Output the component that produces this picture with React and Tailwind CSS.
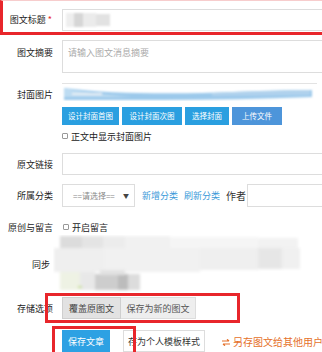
import React from "react";

function Label({ children, className = "" }) {
  return (
    <div className={"w-[53px] shrink-0 text-right text-[9px] leading-none text-[#222] whitespace-nowrap " + className}>
      {children}
    </div>
  );
}

function Check({ label }) {
  return (
    <div className="flex items-center gap-[3px] whitespace-nowrap">
      <span className="w-[6px] h-[6px] border border-[#999] rounded-[1px] bg-white" />
      <span className="text-[9px] leading-none text-[#222]">{label}</span>
    </div>
  );
}

function BlueBtn({ w, children, color = "bg-[#2a9fe0]" }) {
  return (
    <div className={`${w} shrink-0 h-[18px] ${color} text-white text-[7.5px] leading-none whitespace-nowrap flex items-center justify-center`}>
      {children}
    </div>
  );
}

export default function App() {
  return (
    <div className="relative w-[322px] h-[352px] overflow-hidden bg-white font-['Noto_Sans_CJK_SC','Noto_Sans',sans-serif]">
      {/* title row with red annotation */}
      <div className="h-[35px] border-l-[3px] border-b-[3px] border-t border-[#e8262b] border-t-[#f7cdcd] flex items-center pt-[6px]">
        <div className="w-[50px] shrink-0 text-right text-[9px] leading-none text-[#222] pr-[1px] whitespace-nowrap">
          图文标题<span className="text-[#e8262b] ml-[2px]">*</span>
        </div>
        <div className="ml-[9px] w-[270px] shrink-0 h-[22px] border border-[#ddd] bg-white overflow-hidden">
          <svg width="270" height="22" viewBox="0 0 270 22">
            <defs>
              <filter id="b1"><feGaussianBlur stdDeviation="1.2" /></filter>
            </defs>
            <g filter="url(#b1)">
              <rect x="3" y="3" width="8" height="14" fill="#eeeeee" />
              <rect x="11" y="3" width="9" height="14" fill="#d6d6d6" />
              <rect x="20" y="3" width="13" height="14" fill="#ebebeb" />
              <rect x="33" y="4" width="14" height="12" fill="#e2e2e2" />
            </g>
          </svg>
        </div>
      </div>

      {/* summary */}
      <div className="mt-[5px] flex items-start">
        <Label className="pt-[8px]">图文摘要</Label>
        <div className="ml-[9px] w-[270px] shrink-0 h-[33px] border border-[#ddd] px-[5px] pt-[7px] text-[9px] leading-none text-[#aaa] whitespace-nowrap">
          请输入图文消息摘要
        </div>
      </div>

      {/* cover image */}
      <div className="mt-[10px] flex items-center h-[18px]">
        <Label className="pt-[5px]">封面图片</Label>
        <div className="ml-[9px] w-[255px] shrink-0 h-[18px] border-t border-[#e3e3e3]">
          <svg width="255" height="17" viewBox="0 0 255 17">
            <defs>
              <filter id="b2"><feGaussianBlur stdDeviation="0.8" /></filter>
            </defs>
            <g filter="url(#b2)">
              <path d="M2 4 C 40 9, 90 10, 140 9 C 180 8, 220 6, 250 6 L 250 13 C 200 15, 150 16, 100 16 L 2 16 Z" fill="#9cc9eb" />
              <path d="M2 4 C 20 8, 40 11, 70 13 L 2 13 Z" fill="#bddcf2" />
              <path d="M150 9 C 190 7, 220 6, 248 6 L 248 11 L 150 12 Z" fill="#b0d2ed" />
              <rect x="10" y="9" width="30" height="2" fill="#e6eef4" />
            </g>
          </svg>
        </div>
      </div>

      {/* buttons */}
      <div className="mt-[6px] ml-[62px] flex gap-[3px]">
        <BlueBtn w="w-[57px]">设计封面首图</BlueBtn>
        <BlueBtn w="w-[60px]">设计封面次图</BlueBtn>
        <BlueBtn w="w-[44px]">选择封面</BlueBtn>
        <BlueBtn w="w-[50px]" color="bg-[#4d95da]">上传文件</BlueBtn>
      </div>

      {/* checkbox */}
      <div className="h-[22px] ml-[62px] flex items-center">
        <Check label="正文中显示封面图片" />
      </div>

      {/* link */}
      <div className="mt-[6px] flex items-center">
        <Label>原文链接</Label>
        <div className="ml-[9px] w-[270px] shrink-0 h-[22px] border border-[#ddd]" />
      </div>

      {/* category */}
      <div className="mt-[9px] flex items-center whitespace-nowrap">
        <Label>所属分类</Label>
        <div className="ml-[9px] w-[73px] shrink-0 h-[23px] border border-[#ddd] flex items-center pl-[10px] pr-[5px]">
          <span className="text-[8px] leading-none text-[#888] flex-1">==请选择==</span>
          <span className="text-[6px] leading-none text-[#444]">▼</span>
        </div>
        <span className="ml-[7px] shrink-0 text-[9px] leading-none text-[#3a9ad9]">新增分类</span>
        <span className="ml-[6px] shrink-0 text-[9px] leading-none text-[#3a9ad9]">刷新分类</span>
        <span className="ml-[6px] shrink-0 text-[10px] leading-none text-[#333]">作者</span>
        <div className="ml-[1px] w-[80px] shrink-0 h-[23px] border border-[#ddd]" />
      </div>

      {/* comments */}
      <div className="mt-[12px] h-[16px] flex items-center">
        <Label>原创与留言</Label>
        <div className="ml-[10px]">
          <Check label="开启留言" />
        </div>
      </div>

      {/* sync (blurred) */}
      <div className="h-[58px] flex items-center">
        <Label className="pr-[3px]">同步</Label>
        <svg width="269" height="58" viewBox="0 0 269 58" className="shrink-0">
          <defs>
            <filter id="b3"><feGaussianBlur stdDeviation="1.4" /></filter>
          </defs>
          <g filter="url(#b3)" transform="translate(-53 -235)">
            <rect x="60" y="236" width="22" height="12" fill="#dcdcdc" />
            <rect x="82" y="236" width="21" height="12" fill="#e4e4e4" />
            <rect x="103" y="236" width="22" height="12" fill="#ececec" />
            <rect x="125" y="236" width="45" height="12" fill="#f1f1f1" />
            <rect x="170" y="237" width="88" height="11" fill="#f5f5f5" />
            <rect x="258" y="238" width="40" height="10" fill="#f2f2f2" />
            <rect x="54" y="248" width="50" height="24" fill="#efefef" />
            <rect x="104" y="248" width="96" height="24" fill="#f1f1f1" />
            <rect x="200" y="248" width="58" height="22" fill="#efefef" />
            <rect x="258" y="248" width="24" height="21" fill="#e6e6e6" />
            <rect x="282" y="248" width="18" height="21" fill="#f0f0f0" />
            <rect x="60" y="272" width="20" height="18" fill="#eef2e4" />
            <rect x="80" y="272" width="15" height="18" fill="#e8e8e8" />
            <rect x="95" y="274" width="23" height="16" fill="#cdcdcd" />
            <rect x="118" y="274" width="10" height="16" fill="#bcbcbc" />
            <rect x="128" y="274" width="12" height="16" fill="#dcdcdc" />
            <rect x="100" y="270" width="25" height="5" fill="#e2e2e2" />
            <rect x="78" y="286" width="4" height="2" fill="#c6df8a" />
          </g>
        </svg>
      </div>

      {/* storage options */}
      <div className="h-[30px] flex items-center">
        <Label>存储选项</Label>
        <div className="ml-[9px] flex whitespace-nowrap">
          <div className="w-[59px] h-[22px] bg-[#e2e2e2] border border-[#cfcfcf] text-[9px] leading-none text-[#444] flex items-center justify-center">
            覆盖原图文
          </div>
          <div className="w-[75px] h-[22px] bg-[#eeeeee] border border-[#dddddd] border-l-0 text-[9px] leading-none text-[#555] flex items-center justify-center">
            保存为新的图文
          </div>
        </div>
      </div>

      {/* bottom actions */}
      <div className="mt-[7px] ml-[62px] flex items-center whitespace-nowrap">
        <div className="w-[48px] shrink-0 h-[22px] bg-[#2da1e3] text-white text-[9px] leading-none flex items-center justify-center">
          保存文章
        </div>
        <div className="ml-[13px] w-[82px] shrink-0 h-[22px] border border-[#ddd] bg-white text-[9px] leading-none text-[#333] flex items-center justify-center">
          存为个人模板样式
        </div>
        <div className="ml-[17px] shrink-0 flex items-center gap-[3px] text-[10px] leading-none text-[#e5712a] pt-[2px]">
          <svg width="8" height="7" viewBox="0 0 8 7" fill="none" stroke="#e5712a" strokeWidth="1.2">
            <path d="M0 2 H7 M5 0.3 L7 2" />
            <path d="M8 5 H1 M3 6.7 L1 5" />
          </svg>
          另存图文给其他用户
        </div>
      </div>

      {/* red annotation boxes overlay */}
      <div className="absolute left-[45px] top-[293px] w-[195px] h-[30px] border-[3px] border-[#e8262b] pointer-events-none" />
      <div className="absolute left-[52px] top-[326px] w-[84px] h-[40px] border-[3px] border-[#e8262b] pointer-events-none" />
    </div>
  );
}
